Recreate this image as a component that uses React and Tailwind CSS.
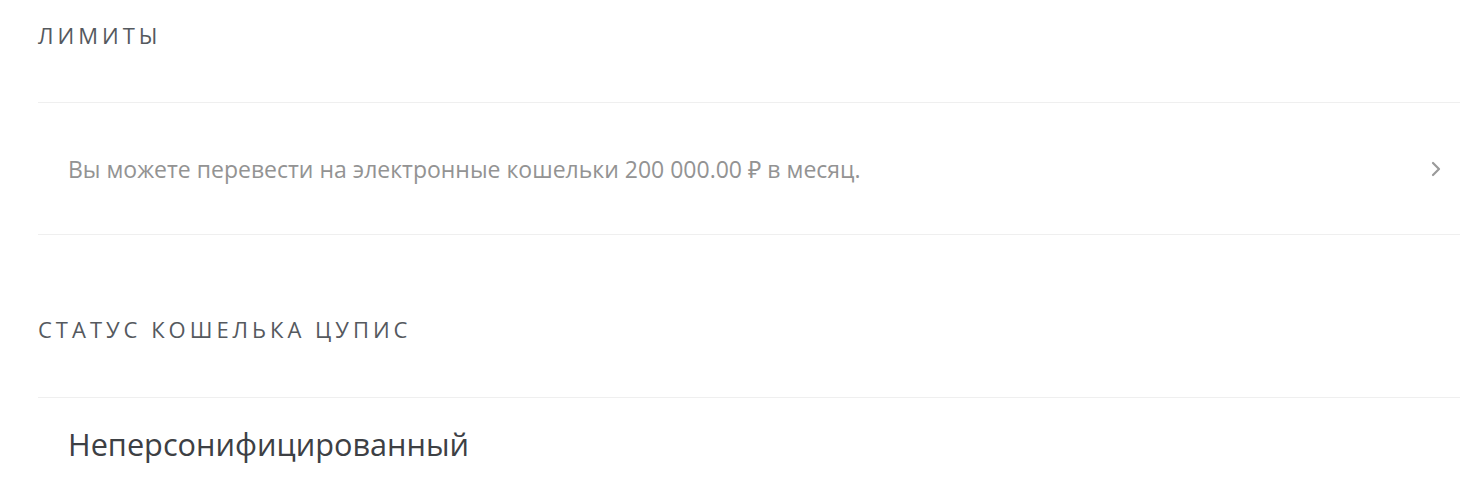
import React from 'react';

const font = { fontFamily: '"Open Sans", "Noto Sans", sans-serif' };

const Chevron = () => (
  <svg width="12" height="18" viewBox="0 0 12 18" fill="none">
    <path d="M3 3l6 6-6 6" stroke="#9a9a9a" strokeWidth="2.2" strokeLinecap="round" strokeLinejoin="round" />
  </svg>
);

const App = () => {
  return (
    <div className="w-[1460px] h-[492px] bg-white overflow-hidden" style={font}>
      {/* limits */}
      <div className="h-[102px] pl-[38px] pt-[20px] text-[22px] leading-[30px] tracking-[4px] text-[#55595e]">
        ЛИМИТЫ
      </div>

      <div className="ml-[38px] border-t border-b border-[#efefef] h-[133px] flex items-center justify-between pl-[30px] pr-[18px]">
        <span className="text-[23px] leading-[30px] text-[#939393]">
          Вы можете перевести на электронные кошельки 200 000.00 ₽ в месяц.
        </span>
        <Chevron />
      </div>

      {/* wallet status */}
      <div className="h-[162px] pl-[38px] pt-[79px] text-[22px] leading-[30px] tracking-[4px] text-[#55595e]">
        СТАТУС КОШЕЛЬКА ЦУПИС
      </div>

      <div className="ml-[38px] border-t border-[#efefef] pl-[30px] pt-[26px]">
        <span className="text-[30.7px] leading-[40px] text-[#3d4044]">Неперсонифицированный</span>
      </div>
    </div>
  );
};

export default App;
